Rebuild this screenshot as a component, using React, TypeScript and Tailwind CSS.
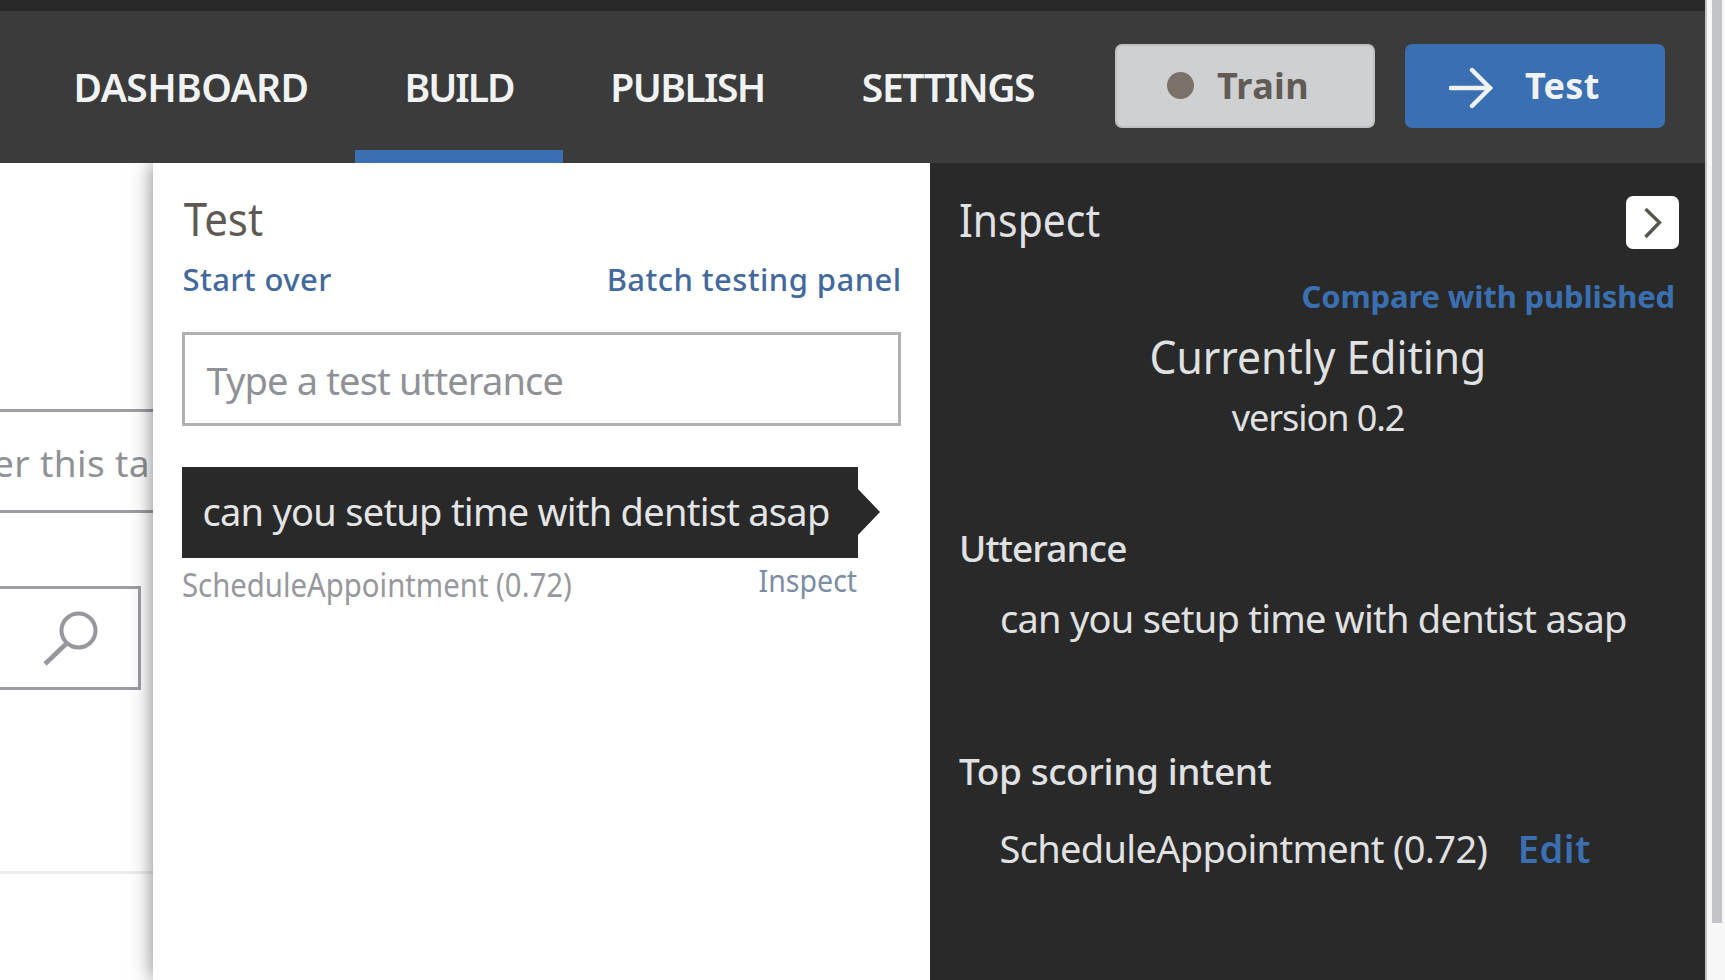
import React from "react";

function Header() {
  return (
    <header className="relative z-10 flex h-[163px] shrink-0 flex-col bg-[#3a3b3a]">
      <div className="h-[11px] bg-[#292929]" />
      <div className="flex flex-1 items-stretch pl-[27px] text-[39px] font-semibold text-[#f1f2f4]">
        <a className="flex w-[328px] items-center justify-center tracking-[-0.6px]">DASHBOARD</a>
        <a className="flex w-[208px] flex-col items-center">
          <span className="flex flex-1 items-center pt-[13px] tracking-[-2px]">BUILD</span>
          <span className="h-[13px] w-full bg-[#3a70b1]" />
        </a>
        <a className="flex w-[249px] items-center justify-center tracking-[-1.6px]">PUBLISH</a>
        <a className="flex w-[272px] items-center justify-center tracking-[-1.4px]">SETTINGS</a>
        <div className="ml-[31px] mt-[32.5px] flex h-[84px] gap-[30px] text-[36px] font-bold">
          <button className="flex w-[260px] items-center rounded-[7px] border-2 border-[#bfc0c2] bg-[#cfd0d2] pl-[50px] text-[#625b55]">
            <span className="mr-[23px] size-[27px] rounded-full bg-[#7a7168]" />
            <span className="tracking-[0.4px]">Train</span>
          </button>
          <button className="flex w-[260px] items-center rounded-[7px] bg-[#3a70b1] pl-[44px] text-[#f1f2f4]">
            <svg className="mt-[4px] h-[42px] w-[46px]" viewBox="0 0 46 42" fill="none" stroke="currentColor" strokeWidth="4.4" strokeLinecap="round">
              <path d="M2 21H41" />
              <path d="M23 3L41 21L23 39" />
            </svg>
            <span className="ml-[30px] tracking-[0.3px]">Test</span>
          </button>
        </div>
      </div>
    </header>
  );
}

function Background() {
  return (
    <section className="flex w-[153px] shrink-0 flex-col overflow-hidden bg-white">
      <div className="mt-[246px] flex h-[104px] items-center justify-end border-y-[3px] border-[#9c9ea3] pt-[3px] text-[37px] text-[#8f9196]">
        <span className="whitespace-nowrap pr-[3px] tracking-[0.4px]">er this ta</span>
      </div>
      <div className="mt-[73px] flex h-[104px] w-[141px] items-center justify-end border-[3.5px] border-l-0 border-[#9c9ea3] pr-[40px]">
        <svg className="h-[56px] w-[56px] shrink-0" viewBox="0 0 56 56" fill="none" stroke="#95979c" strokeWidth="4">
          <circle cx="36.500" cy="20.500" r="17" />
          <path d="M25 33L3 54" strokeWidth="4.500" />
        </svg>
      </div>
      <div className="mt-[181px] h-[3px] bg-[#ebecee]" />
    </section>
  );
}

function TestPanel() {
  return (
    <section className="relative w-[777px] shrink-0 bg-white px-[28.500px] pt-[23px] shadow-[0_0_20px_rgba(0,0,0,0.5)]">
      <h2 className="origin-left scale-x-[.912] pl-[2px] text-[46px] leading-[64px] text-[#5f5954]">Test</h2>
      <div className="mt-[7px] flex justify-between pl-[1px] text-[31px] font-medium leading-[44px] text-[#43699c]">
        <a className="tracking-[0.4px]">Start over</a>
        <a className="tracking-[0.42px]">Batch testing panel</a>
      </div>
      <div className="mt-[31px] flex h-[94px] w-[719px] items-center border-[3px] border-[#b0b1b5] pt-[2px] pl-[22px] text-[38px] tracking-[-0.85px] text-[#8f9196]">
        Type a test utterance
      </div>
      <div className="relative mt-[41px] flex h-[91px] w-[676px] items-center bg-[#292929] pl-[21px] text-[38px] tracking-[-0.74px] text-[#e4e5e7]">
        <span className="-mt-[2px] whitespace-nowrap">can you setup time with dentist asap</span>
        <svg className="absolute left-[675px] top-[21px] h-[48px] w-[24px]" viewBox="0 0 24 48">
          <path d="M0 0L23 24L0 48Z" fill="#292929" />
        </svg>
      </div>
      <div className="flex w-[676px] items-start justify-between text-[#97989d]">
        <span className="mt-[5px] origin-left scale-x-[.916] whitespace-nowrap text-[32px] leading-[44px]">ScheduleAppointment (0.72)</span>
        <span className="-mt-[1px] origin-right scale-x-[.92] text-[31px] leading-[46px] text-[#7c8ca5]">Inspect</span>
      </div>
    </section>
  );
}

function InspectPanel() {
  return (
    <section className="relative flex-1 bg-[#292929] pl-[29px] pr-[25px] text-[#e0e1e3]">
      <div className="flex items-start justify-between pt-[33px]">
        <h2 className="-mt-[9px] origin-left scale-x-[.888] text-[46px] leading-[64px]">Inspect</h2>
        <button className="mr-[1px] flex h-[53px] w-[53px] items-center justify-center rounded-[7px] bg-white">
          <svg className="h-[32px] w-[20px]" viewBox="0 0 20 32" fill="none" stroke="#5a544f" strokeWidth="3.400">
            <path d="M2.500 2L16.500 15.500L2.500 30" />
          </svg>
        </button>
      </div>
      <div className="mt-[23px] flex justify-end pr-[5px] text-[31px] font-bold leading-[44px] tracking-[-0.14px] text-[#3a70b1]">Compare with published</div>
      <div className="mt-[5px] flex flex-col items-center pr-[3px]">
        <div className="scale-x-[.926] text-[46px] leading-[66px]">Currently Editing</div>
        <div className="mt-[4px] text-[36px] leading-[50px] tracking-[-1.05px]">version 0.2</div>
      </div>
      <h3 className="mt-[79px] text-[37px] font-medium leading-[52px] tracking-[-0.9px]">Utterance</h3>
      <p className="mt-[17px] whitespace-nowrap pl-[41px] text-[38px] leading-[54px] tracking-[-0.75px]">can you setup time with dentist asap</p>
      <h3 className="mt-[100px] text-[37px] font-medium leading-[52px] tracking-[-0.4px]">Top scoring intent</h3>
      <p className="mt-[24px] flex whitespace-nowrap pl-[40.500px] text-[38px] leading-[54px]">
        <span className="tracking-[-0.68px]">ScheduleAppointment (0.72)</span>
        <a className="ml-[30.500px] font-semibold tracking-[0.5px] text-[#3a70b1]">Edit</a>
      </p>
    </section>
  );
}

export default function App() {
  return (
    <div className="flex h-[980px] w-[1725px] overflow-hidden bg-white font-['Noto_Sans',sans-serif]">
      <main className="flex w-[1705px] shrink-0 flex-col">
        <Header />
        <div className="flex min-h-0 flex-1 overflow-hidden">
          <Background />
          <TestPanel />
          <InspectPanel />
        </div>
      </main>
      <aside className="flex w-[20px] flex-col border-l-2 border-[#c0c1c3] bg-[#f7f7f8] pl-[5px]">
        <div className="h-[923px] w-[10px] bg-[#c3c4c7]" />
      </aside>
    </div>
  );
}
